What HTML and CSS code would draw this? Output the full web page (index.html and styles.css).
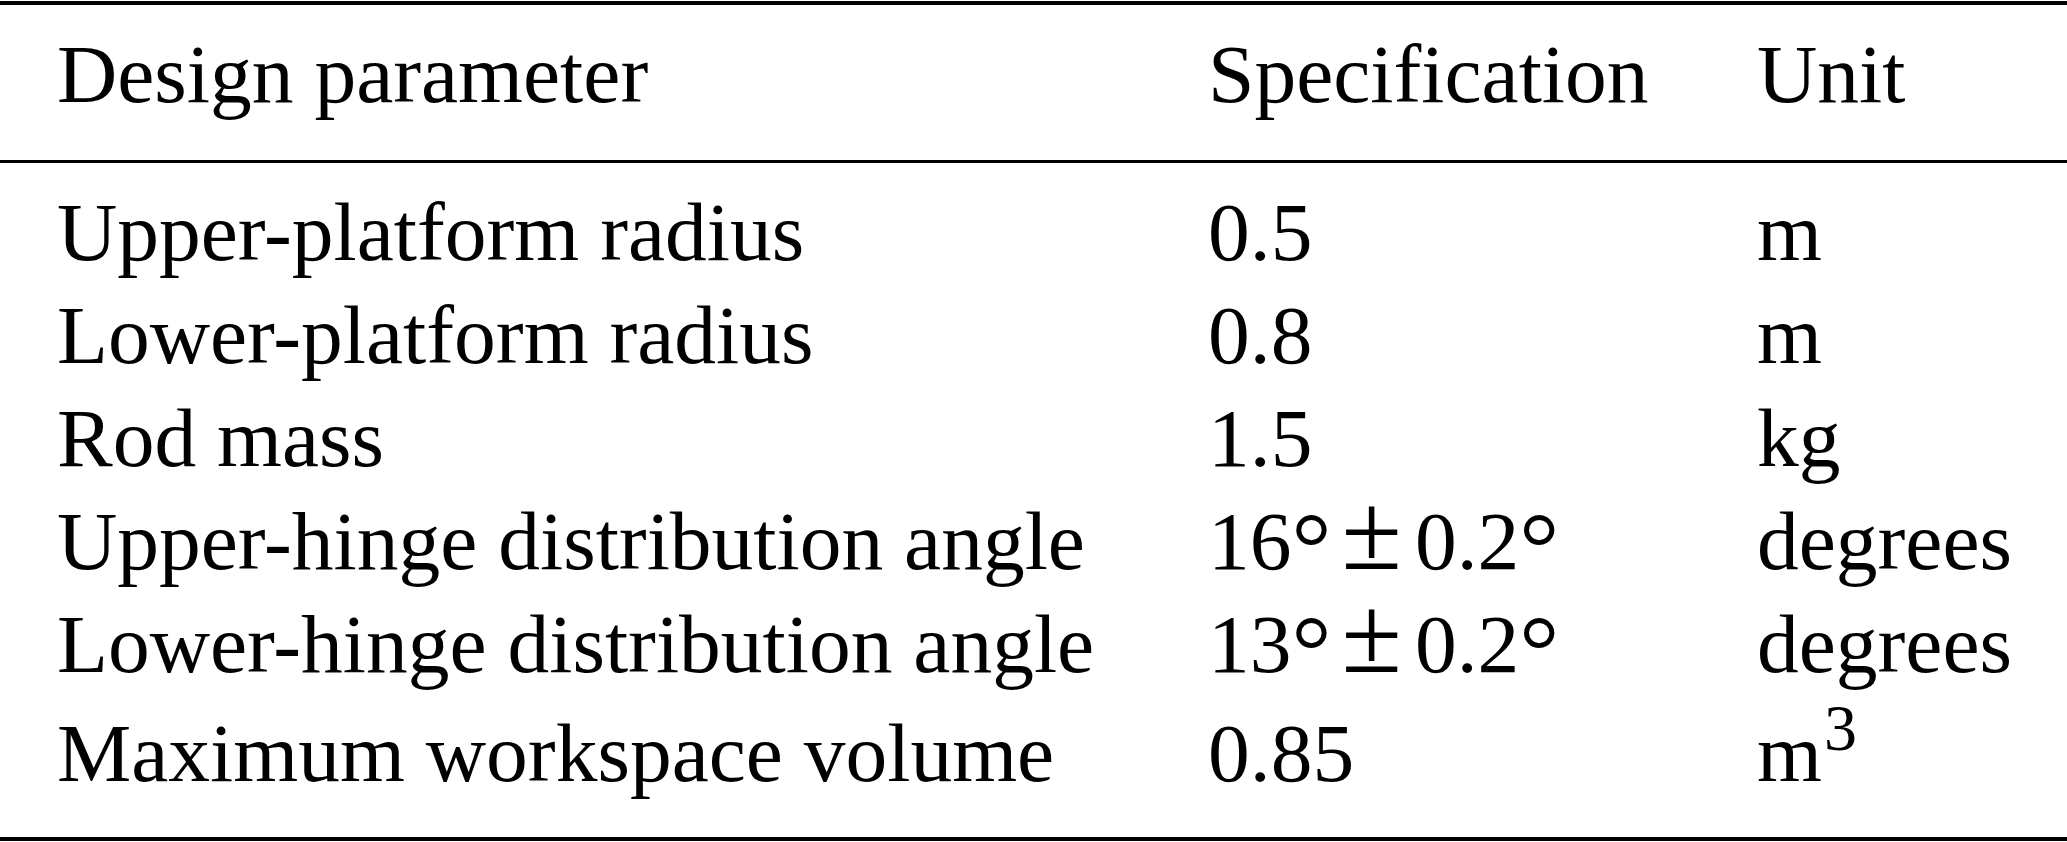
FILE: index.html
```html
<!DOCTYPE html>
<html>
<head>
    <title>Design parameters</title>
    <link rel="stylesheet" href="styles.css">
</head>
<body>
    <table class="spec-table">
        <colgroup>
            <col class="col-param">
            <col class="col-spec">
            <col class="col-unit">
        </colgroup>
        <thead>
            <tr>
                <th>Design parameter</th>
                <th>Specification</th>
                <th>Unit</th>
            </tr>
        </thead>
        <tbody>
            <tr>
                <td>Upper-platform radius</td>
                <td>0.5</td>
                <td>m</td>
            </tr>
            <tr>
                <td>Lower-platform radius</td>
                <td>0.8</td>
                <td>m</td>
            </tr>
            <tr>
                <td>Rod mass</td>
                <td>1.5</td>
                <td>kg</td>
            </tr>
            <tr>
                <td>Upper-hinge distribution angle</td>
                <td>16<span class="deg">&deg;</span><span class="pm">&plusmn;</span>0.2<span class="deg">&deg;</span></td>
                <td>degrees</td>
            </tr>
            <tr>
                <td>Lower-hinge distribution angle</td>
                <td>13<span class="deg">&deg;</span><span class="pm">&plusmn;</span>0.2<span class="deg">&deg;</span></td>
                <td>degrees</td>
            </tr>
            <tr>
                <td>Maximum workspace volume</td>
                <td>0.85</td>
                <td>m<sup>3</sup></td>
            </tr>
        </tbody>
    </table>
</body>
</html>
```

FILE: styles.css
```css
body {
    margin: 0;
    padding-top: 1px;
    background-color: #fff;
    color: #000;
    font-family: "Liberation Serif", "Times New Roman", serif;
}

.spec-table {
    width: 2067px;
    table-layout: fixed;
    border-collapse: collapse;
    border-top: 4px solid #000;
    border-bottom: 4px solid #000;
    font-size: 83.5px;
    line-height: 103px;
}

.col-param {
    width: 1151px;
}

.col-spec {
    width: 549px;
}

.col-unit {
    width: 367px;
}

.spec-table th,
.spec-table td {
    padding: 0 0 0 57px;
    text-align: left;
    font-weight: normal;
    white-space: nowrap;
    vertical-align: baseline;
}

.spec-table th {
    padding-top: 18px;
    padding-bottom: 34px;
    border-bottom: 3px solid #000;
}

.spec-table tbody tr:first-child td {
    padding-top: 18px;
}

.spec-table tbody tr:last-child td {
    padding-top: 6px;
    padding-bottom: 32px;
}

/* degree sign, bigger ring like the math one */
.deg {
    font-size: 100px;
    line-height: 0;
    vertical-align: -12px;
}

.pm {
    font-size: 110px;
    line-height: 0;
    margin: 0 13px 0 10px;
}

sup {
    font-size: 66px;
    line-height: 0;
    vertical-align: 31px;
    margin-left: 2px;
}
```
